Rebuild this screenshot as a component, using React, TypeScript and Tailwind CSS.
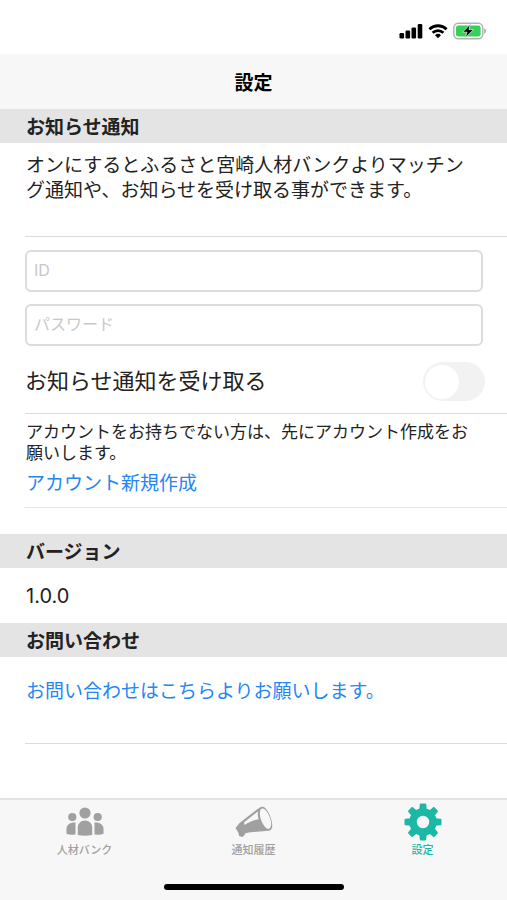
import { ReactNode, useState } from 'react';

const TEETH = [0, 45, 90, 135, 180, 225, 270, 315];

function StatusBar() {
  return (
    <div className="flex h-[54px] items-center justify-end gap-[5px] bg-white pr-5 pt-2">
      {/* Signal */}
      <svg width="24" height="16" viewBox="0 0 24 16" aria-hidden="true">
        <rect x="0.5" y="10" width="4.6" height="5.5" rx="1.2" />
        <rect x="6.5" y="7.5" width="4.6" height="8" rx="1.2" />
        <rect x="12.5" y="4.5" width="4.6" height="11" rx="1.2" />
        <rect x="18.7" y="1" width="4.6" height="14.5" rx="1.2" />
      </svg>
      {/* Wifi */}
      <svg width="20" height="16" viewBox="0 0 20 16" aria-hidden="true">
        <path d="M1.4 6.2a12.4 12.4 0 0 1 17.2 0" fill="none" stroke="#000" strokeWidth="2.8" />
        <path d="M4.6 9.8a7.8 7.8 0 0 1 10.8 0" fill="none" stroke="#000" strokeWidth="2.6" />
        <path d="M7 12.2a4.5 4.5 0 0 1 6 0L10 15.3z" />
      </svg>
      {/* Battery */}
      <svg width="34" height="18" viewBox="0 0 34 18" aria-hidden="true">
        <rect x="0.8" y="1.3" width="29" height="15.4" rx="4.5" fill="#fff" stroke="#b5b0b5" strokeWidth="1.4" />
        <rect x="3" y="3.4" width="24.6" height="11.2" rx="2.4" fill="#35d058" />
        <path d="M31.2 6.3c2.4.8 2.4 4.6 0 5.4z" fill="#aaa6aa" />
        <path
          d="M17.3 2.2 9.5 10.200h4.400l-1.500 5.600 8.200-8.200H16z"
          stroke="#d5f6dc"
          strokeWidth="0.8"
          strokeLinejoin="round"
        />
      </svg>
    </div>
  );
}

function SectionHeader({ children }: { children: ReactNode }) {
  return (
    <h2 className="bg-[#e4e4e4] pb-0.5 pl-[26px] pt-1.5 text-[19px] font-bold leading-[26px] text-[#222]">
      {children}
    </h2>
  );
}

function PeopleIcon() {
  return (
    <svg width="38" height="38" viewBox="0 0 38 38" fill="currentColor" aria-hidden="true">
      <circle cx="19" cy="10" r="5.6" />
      <circle cx="6.3" cy="14" r="4.1" />
      <circle cx="31.7" cy="14" r="4.1" />
      <path d="M11.8 32v-7.5a7 7 0 0 1 7-7h.4a7 7 0 0 1 7 7V32q-7.2 1.4-14.400 0z" />
      <path d="M9.5 19.500v12c-3 .3-6.800.1-9-.8v-5c0-4.200 4-6.800 9-6.200z" />
      <path d="M28.500 19.500v12c3 .3 6.800.1 9-.8v-5c0-4.200-4-6.800-9-6.200z" />
    </svg>
  );
}

function MegaphoneIcon() {
  return (
    <svg width="38" height="38" viewBox="0 0 38 38" fill="currentColor" aria-hidden="true">
      <path d="M0.5 25 4.500 20 21.500 6.800c2.500-2 4.500-3.500 6.500-3 5 1.200 10.500 15.200 9 21-.5 2-1.800 2.800-3.500 2.900L13.500 29.500l-3.500 1-.2 1.200-2.300 2.300-3.500-1-.5-3z" />
      <ellipse cx="30.500" cy="15.700" rx="4.600" ry="10.800" transform="rotate(-20 30.500 15.700)" fill="#f7f7f7" />
      <path d="M9 19.500 23 8.200c-.5 3-.2 5.500.7 8-5.500 1-10 3-14 5.800z" fill="#f7f7f7" />
    </svg>
  );
}

function GearIcon() {
  return (
    <svg width="38" height="38" viewBox="0 0 38 38" fill="currentColor" aria-hidden="true">
      <circle cx="19" cy="19" r="10" fill="none" stroke="currentColor" strokeWidth="7.6" />
      {TEETH.map((angle) => (
        <path
          key={angle}
          d="M15.2 7.5 15.8 1.5q.2-1 1-1h4.400q.8 0 1 1l.6 6z"
          transform={`rotate(${angle} 19 19)`}
        />
      ))}
    </svg>
  );
}

interface TabProps {
  icon: ReactNode;
  label: string;
  active?: boolean;
}

function Tab({ icon, label, active = false }: TabProps) {
  return (
    <button
      type="button"
      aria-current={active ? 'page' : undefined}
      className={`flex flex-1 flex-col items-center gap-px text-[11px] font-medium leading-4 ${
        active ? 'text-[#1bb9a5]' : 'text-[#a0a0a0]'
      }`}
    >
      {icon}
      {label}
    </button>
  );
}

export default function App() {
  const [receive, setReceive] = useState(false);

  return (
    <div className="flex min-h-screen flex-col bg-white font-['Inter','Noto_Sans_CJK_JP',sans-serif] text-[#222]">
      <StatusBar />

      <header className="bg-[#f7f7f7] pb-[11px] pt-4 text-center">
        <h1 className="text-[19px] font-bold leading-7 text-black">設定</h1>
      </header>

      <main className="flex-1">
        <SectionHeader>お知らせ通知</SectionHeader>
        <div className="pl-[25px]">
          <p className="border-b border-[#dcdcdc] pb-[33px] pl-px pr-7 pt-2.5 text-[19px] leading-[25px]">
            オンにするとふるさと宮崎人材バンクよりマッチング通知や、お知らせを受け取る事ができます。
          </p>

          <form className="border-b border-[#dcdcdc] pb-3 pt-[13px]">
            <div className="flex flex-col gap-3 pr-6">
              <input
                type="text"
                aria-label="ID"
                placeholder="ID"
                className="h-[42px] w-full rounded-md border-2 border-[#dcdcdc] px-[7px] pb-0.5 text-base placeholder:text-[#c8c8c8]"
              />
              <input
                type="password"
                aria-label="パスワード"
                placeholder="パスワード"
                className="h-[42px] w-full rounded-md border-2 border-[#dcdcdc] px-[7px] pb-0.5 text-base placeholder:text-[#c8c8c8]"
              />
            </div>
            <div className="flex items-center justify-between pr-[22px] pt-4">
              <label htmlFor="receive" className="text-[22px] leading-[39px]">
                お知らせ通知を受け取る
              </label>
              <input
                id="receive"
                type="checkbox"
                role="switch"
                checked={receive}
                onChange={(e) => setReceive(e.target.checked)}
                className="flex h-[39px] w-[62px] appearance-none items-center rounded-full bg-[#f2f2f2] px-0.5 before:size-[34px] before:rounded-full before:bg-white checked:justify-end checked:bg-[#35d058]"
              />
            </div>
          </form>

          <div className="border-b border-[#e4e4e4] pb-2.5 pl-px pt-2">
            <p className="pr-7 text-[17px] leading-[21px]">
              アカウントをお持ちでない方は、先にアカウント作成をお願いします。
            </p>
            <a href="#signup" className="mt-1.5 block text-[19px] leading-[27px] text-[#2486f5]">
              アカウント新規作成
            </a>
          </div>
        </div>

        <div className="pt-[26px]">
          <SectionHeader>バージョン</SectionHeader>
          <p className="pb-[13px] pl-[26px] pt-[15px] text-[20px] leading-[27px]">1.0.0</p>
        </div>

        <SectionHeader>お問い合わせ</SectionHeader>
        <div className="pl-[25px]">
          <div className="border-b border-[#dcdcdc] pb-[38px] pl-px pt-[22px]">
            <a href="#contact" className="block text-[19px] leading-[26px] text-[#2486f5]">
              お問い合わせはこちらよりお願いします。
            </a>
          </div>
        </div>
      </main>

      <footer className="border-t-2 border-[#e2e2e2] bg-[#f7f7f7] pb-[10px] pt-[3px]">
        <nav className="flex">
          <Tab icon={<PeopleIcon />} label="人材バンク" />
          <Tab icon={<MegaphoneIcon />} label="通知履歴" />
          <Tab icon={<GearIcon />} label="設定" active />
        </nav>
        <div className="mx-auto mt-[26px] h-[6px] w-[180px] rounded-full bg-black" />
      </footer>
    </div>
  );
}
